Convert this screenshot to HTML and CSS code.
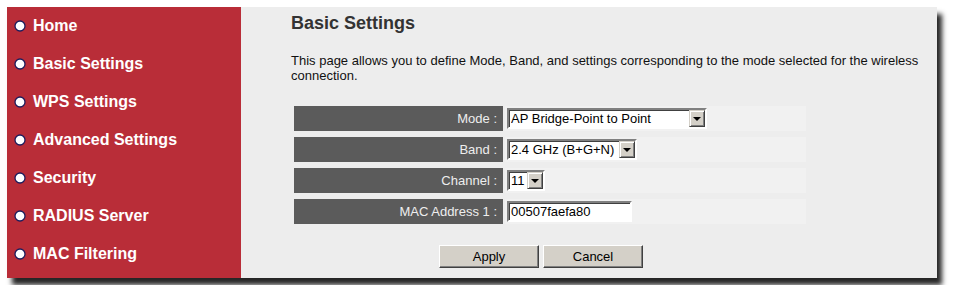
FILE: index.html
```html
<!DOCTYPE html>
<html>
<head>
  <meta charset="utf-8">
  <title>Basic Settings</title>
  <link rel="stylesheet" href="styles.css">
</head>
<body>
  <div class="frame">
    <nav class="menu">
      <a class="item" href="#"><svg class="dot" viewBox="0 0 12 12"><circle cx="6" cy="6" r="5" /></svg>Home</a>
      <a class="item" href="#"><svg class="dot" viewBox="0 0 12 12"><circle cx="6" cy="6" r="5" /></svg>Basic Settings</a>
      <a class="item" href="#"><svg class="dot" viewBox="0 0 12 12"><circle cx="6" cy="6" r="5" /></svg>WPS Settings</a>
      <a class="item" href="#"><svg class="dot" viewBox="0 0 12 12"><circle cx="6" cy="6" r="5" /></svg>Advanced Settings</a>
      <a class="item" href="#"><svg class="dot" viewBox="0 0 12 12"><circle cx="6" cy="6" r="5" /></svg>Security</a>
      <a class="item" href="#"><svg class="dot" viewBox="0 0 12 12"><circle cx="6" cy="6" r="5" /></svg>RADIUS Server</a>
      <a class="item" href="#"><svg class="dot" viewBox="0 0 12 12"><circle cx="6" cy="6" r="5" /></svg>MAC Filtering</a>
    </nav>

    <main class="content">
      <h1>Basic Settings</h1>
      <p>This page allows you to define Mode, Band, and settings corresponding to the mode selected for the wireless connection.</p>

      <form class="settings">
        <div class="row">
          <label class="key">Mode :</label>
          <div class="val">
            <span class="select mode"><select><option>AP Bridge-Point to Point</option></select><span class="arrow"></span></span>
          </div>
        </div>
        <div class="row">
          <label class="key">Band :</label>
          <div class="val">
            <span class="select band"><select><option>2.4 GHz (B+G+N)</option></select><span class="arrow"></span></span>
          </div>
        </div>
        <div class="row">
          <label class="key">Channel :</label>
          <div class="val">
            <span class="select channel"><select><option>11</option></select><span class="arrow"></span></span>
          </div>
        </div>
        <div class="row">
          <label class="key">MAC Address 1 :</label>
          <div class="val">
            <input class="text" type="text" value="00507faefa80">
          </div>
        </div>

        <div class="buttons">
          <button type="button">Apply</button>
          <button type="button">Cancel</button>
        </div>
      </form>
    </main>
  </div>
</body>
</html>
```

FILE: styles.css
```css
* {
  box-sizing: border-box;
}

body {
  margin: 0;
  background: #fff;
  font-family: "Liberation Sans", Arial, sans-serif;
}

.frame {
  display: flex;
  margin: 7px;
  width: 930px;
  height: 271px;
  background: #ededed;
  box-shadow: 5px 7px 5px rgba(0, 0, 0, 0.85);
}

/* left menu */
.menu {
  width: 234px;
  background: #b92d38;
  display: flex;
  flex-direction: column;
}

.item {
  height: 38px;
  display: flex;
  align-items: center;
  padding-left: 7px;
  color: #fff;
  font-weight: bold;
  font-size: 16px;
  text-decoration: none;
}

.dot {
  width: 12px;
  height: 12px;
  margin-right: 7px;
}

.dot circle {
  fill: #fff;
  stroke: #1c1c5c;
  stroke-width: 1.3;
}

/* main panel */
.content {
  flex: 1;
  padding: 6px 12px 0 50px;
  color: #111;
}

h1 {
  margin: 0;
  font-size: 18px;
  line-height: 20px;
  color: #333;
}

p {
  margin: 20px 0 0;
  font-size: 13px;
  line-height: 15px;
}

.settings {
  margin-top: 23px;
  width: 512px;
  margin-left: 3px;
}

.row {
  display: flex;
  height: 25px;
  margin-bottom: 6px;
}

.key {
  width: 209px;
  background: #5b5b5b;
  color: #eee;
  font-size: 13px;
  text-align: right;
  padding-right: 6px;
  line-height: 25px;
}

.val {
  flex: 1;
  margin-left: 2px;
  background: #f1f1f1;
  display: flex;
  align-items: center;
  padding-left: 2px;
}

.select {
  position: relative;
  display: inline-block;
  height: 21px;
}

.select select {
  appearance: none;
  -webkit-appearance: none;
  height: 21px;
  width: 100%;
  margin: 0;
  padding: 0 0 0 2px;
  border: 2px solid;
  border-color: #808080 #fff #fff #808080;
  box-shadow: inset 1px 1px 0 #404040;
  background: #fff;
  font-family: "Liberation Sans", Arial, sans-serif;
  font-size: 13px;
  color: #000;
  border-radius: 0;
}

.mode { width: 200px; }
.band { width: 130px; }
.channel { width: 38px; }

.arrow {
  position: absolute;
  top: 2px;
  right: 2px;
  width: 16px;
  height: 17px;
  background: #d4d0c8;
  border: 1px solid;
  border-color: #d4d0c8 #404040 #404040 #d4d0c8;
  box-shadow: inset 1px 1px 0 #fff, inset -1px -1px 0 #808080;
}

.arrow::after {
  content: "";
  position: absolute;
  left: 3px;
  top: 6px;
  border-left: 4px solid transparent;
  border-right: 4px solid transparent;
  border-top: 4px solid #000;
}

.text {
  width: 125px;
  height: 21px;
  margin: 0;
  padding: 0 0 0 2px;
  border: 2px solid;
  border-color: #808080 #fff #fff #808080;
  box-shadow: inset 1px 1px 0 #404040;
  background: #fff;
  font-family: "Liberation Sans", Arial, sans-serif;
  font-size: 13px;
  color: #000;
}

.buttons {
  margin-top: 21px;
  padding-right: 18px;
  display: flex;
  justify-content: center;
  gap: 4px;
}

.buttons button {
  width: 100px;
  height: 23px;
  padding: 0;
  background: #d4d0c8;
  border: 1px solid;
  border-color: #fff #404040 #404040 #fff;
  box-shadow: inset -1px -1px 0 #808080;
  font-family: "Liberation Sans", Arial, sans-serif;
  font-size: 13px;
  color: #000;
}
```
